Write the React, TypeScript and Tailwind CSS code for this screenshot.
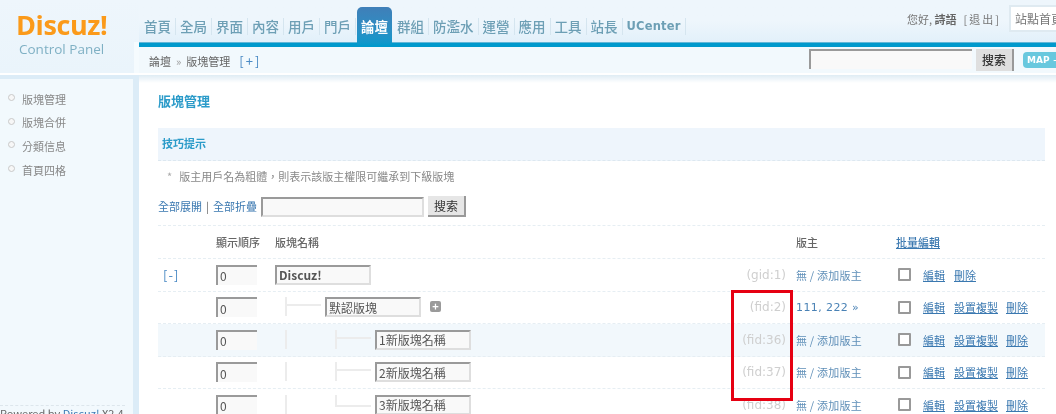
import React from "react";

const font = { fontFamily: '"Noto Sans CJK TC", "Liberation Sans", sans-serif' };

const navItems = ["首頁", "全局", "界面", "內容", "用戶", "門戶", "論壇", "群組", "防濫水", "運營", "應用", "工具", "站長", "UCenter"];
const sideItems = ["版塊管理", "版塊合併", "分類信息", "首頁四格"];

// old style bevelled input, top/left dark and bottom/right light
const inputCls =
  "h-[20px] border-2 border-t-[#9a9a9a] border-l-[#9a9a9a] border-r-[#dedede] border-b-[#dedede] bg-[#f9f9f9] outline-none text-[12px] text-[#555] px-[2px]";

const NavBar = () => (
  <div className="flex h-[42px] pl-[1px] items-end">
    {navItems.map((item) =>
      item === "論壇" ? (
        <div
          key={item}
          className="w-[35px] h-[39px] -mb-[4px] mx-[1px] rounded-t-[5px] bg-gradient-to-b from-[#3f7fb8] to-[#0099cc] text-white font-bold text-[13.5px] flex items-center justify-center"
        >
          {item}
        </div>
      ) : (
        <div
          key={item}
          className="h-[17px] mb-[7px] flex items-center px-[4px] border-r border-[#d5e5ef] text-[13.5px] font-medium leading-none text-[#6d9fb5] whitespace-nowrap"
        >
          {item === "UCenter" ? (
            <span className="text-[11.5px] font-bold tracking-[0.2px]" style={{ fontFamily: '"DejaVu Sans", sans-serif' }}>{item}</span>
          ) : (
            item
          )}
        </div>
      ),
    )}
  </div>
);

const TopBar = () => (
  <div className="h-[73px] flex shrink-0">
    <div className="w-[139px] shrink-0 relative pl-[16px] pt-[10px] bg-gradient-to-b from-[#eef6fc] to-[#eaf4fb]">
      <div className="text-[27px] leading-[30px] font-bold tracking-[-0.4px] text-[#fb9a1a]" style={{ fontFamily: '"Open Sans", sans-serif' }}>
        Discuz!
      </div>
      <div className="text-[13.5px] leading-[18px] ml-[3px] text-[#7fb0c4]" style={{ fontFamily: '"Open Sans", sans-serif' }}>
        Control Panel
      </div>
      <div className="absolute right-0 bottom-0 w-[5px] h-[31px] bg-[#f5fbfe]" />
    </div>
    <div className="flex-1 min-w-0">
      <div className="h-[42px] flex justify-between bg-gradient-to-b from-[#eef6fc] via-[#eef6fc] to-[#e2f0fa]">
        <NavBar />
        <div className="flex items-start pt-[5px] text-[11px] text-[#777] whitespace-nowrap -mr-[19px]">
          <span className="mt-[6px]">
            您好, <b className="text-[#666]">詩語</b>
            <span className="ml-[7px] tracking-[2px]">[退出]</span>
          </span>
          <div className="ml-[8px] w-[66px] h-[27px] border-2 border-[#dfeaf1] bg-white pl-[4px] leading-[23px] text-[#777] text-[12px] overflow-hidden">站點首頁</div>
        </div>
      </div>
      <div className="h-[5px] bg-[#0099cc] border-t border-[#62b7d8]" />
      <div className="h-[26px] flex items-center justify-between bg-[#f2f9fd]">
        <div className="pl-[10px] pt-[2px] text-[11px] text-[#666] whitespace-nowrap">
          論壇<span className="mx-[5px] text-[#999]">»</span>版塊管理
          <span className="ml-[9px] text-[13px] tracking-[2px] text-[#4a8ac4]">[+]</span>
        </div>
        <div className="flex items-center -mr-[7px]">
          <div className="w-[163px] h-[20px] mb-[2px] border-2 border-b-0 border-r-0 border-[#9a9a9a] bg-[#f9f9f9]" />
          <div className="ml-[4px] w-[38px] h-[22px] border-r-2 border-[#999] bg-[#dfdfdf] text-[12px] font-medium text-[#333] text-center leading-[22px]">搜索</div>
          <div className="ml-[9px] w-[40px] h-[16px] rounded-[4px] bg-[#68c8de] text-white font-bold text-[9px] pl-[4px] leading-[16px] whitespace-nowrap overflow-hidden" style={{ fontFamily: '"DejaVu Sans", sans-serif' }}>MAP +</div>
        </div>
      </div>
    </div>
  </div>
);

const Sidebar = () => (
  <div className="w-[139px] shrink-0 h-full flex flex-col bg-[#f2f9fd] border-r-[6px] border-[#dcecf7]">
    <div className="h-[4px] bg-[#dcecf7]" />
    <ul className="pt-[8px] pl-[8px] flex-1">
      {sideItems.map((item) => (
        <li key={item} className="h-[23.7px] flex items-center text-[11px] text-[#888]">
          <span className="w-[7px] h-[7px] rounded-full border border-[#c9c9c9] mr-[7px] -mt-[3px] bg-[#f7f7f7]" />
          {item}
        </li>
      ))}
    </ul>
    <div className="h-[9px] mr-[8px] border-t border-dashed border-[#dde6ec] text-[11px] leading-[13px] text-[#666] whitespace-nowrap pt-[1px]">
      Powered by <span className="text-[#3a7ab5]">Discuz!</span> X2.4
    </div>
  </div>
);

type Level = "pipe" | "tee" | "end";

const Tree = ({ kind }: { kind: Level }) => (
  <div className="w-[50px] h-[20px] pl-[10px] shrink-0">
    {kind === "pipe" && <div className="h-[19px] w-[2px] bg-[#ececec]" />}
    {kind === "tee" && (
      <div className="h-[19px] w-[36px] border-l-2 border-[#ececec]">
        <div className="h-[9px] border-b-2 border-[#ececec]" />
      </div>
    )}
    {kind === "end" && <div className="h-[12px] w-[36px] border-l-2 border-b-2 border-[#ececec]" />}
  </div>
);

const Ops = ({ copy }: { copy: boolean }) => (
  <div className="flex items-center pl-[2px] text-[11px] text-[#3a78b0] underline whitespace-nowrap">
    <span className="w-[13px] h-[13px] mr-[12px] border-2 border-[#999] rounded-[1px] bg-white" />
    <span className="w-[31px]">編輯</span>
    {copy && <span className="w-[52px]">設置複製</span>}
    <span>刪除</span>
  </div>
);

const Row = ({
  toggle,
  levels = [],
  name,
  bold,
  plus,
  id,
  owner,
  copy = true,
  bg,
}: {
  toggle?: boolean;
  levels?: Level[];
  name: string;
  bold?: boolean;
  plus?: boolean;
  id: string;
  owner?: string;
  copy?: boolean;
  bg?: boolean;
}) => (
  <div className={`grid grid-cols-[58px_59px_521px_100px_149px] items-center h-[32.5px] border-b border-dashed border-[#e6eef3] ${bg ? "bg-[#f2f8fc]" : ""}`}>
    <div className="pl-[5px] text-[13px] text-[#4a8ac4] tracking-[1px]">{toggle ? "[-]" : ""}</div>
    <input readOnly defaultValue="0" className={`${inputCls} w-[41px] border-r-0 border-b-0`} />
    <div className="flex items-center min-w-0">
      {levels.map((l, i) => (
        <Tree key={i} kind={l} />
      ))}
      <input readOnly defaultValue={name} className={`${inputCls} w-[96px] ${bold ? "font-bold text-[#333]" : ""}`} />
      {plus && <span className="ml-[9px] -mt-[2px] w-[11px] h-[11px] rounded-[2px] bg-[#9a9a9a] text-white text-[11px] leading-[11px] font-bold text-center">+</span>}
      <span className="ml-auto pr-[10px] text-[12px] text-[#cfcfcf]" style={{ fontFamily: '"DejaVu Sans", sans-serif' }}>{id}</span>
    </div>
    <div className="text-[11px]">
      {owner ? (
        <span className="font-medium tracking-[0.4px] text-[#4a82b5]" style={{ fontFamily: '"DejaVu Sans", sans-serif' }}>{owner}</span>
      ) : (
        <span className="text-[#5f8fb8] tracking-[0.2px]">無 / 添加版主</span>
      )}
    </div>
    <Ops copy={copy} />
  </div>
);

export default function App() {
  const rows = [
    { toggle: true, name: "Discuz!", bold: true, id: "(gid:1)", copy: false, levels: [] as Level[] },
    { name: "默認版塊", plus: true, id: "(fid:2)", owner: "111, 222 »", levels: ["tee"] as Level[] },
    { name: "1新版塊名稱", id: "(fid:36)", bg: true, levels: ["pipe", "tee"] as Level[] },
    { name: "2新版塊名稱", id: "(fid:37)", levels: ["pipe", "tee"] as Level[] },
    { name: "3新版塊名稱", id: "(fid:38)", levels: ["pipe", "end"] as Level[] },
  ];

  return (
    <div className="w-[1056px] h-[414px] overflow-hidden relative bg-white flex flex-col blur-[0.4px]" style={font}>
      <TopBar />
      <div className="h-[2px] bg-white shrink-0" />
      <div className="flex flex-1 min-h-0">
        <Sidebar />
        <div className="flex-1 min-w-0 overflow-hidden">
          <div className="h-[8px] -mb-[8px] bg-gradient-to-b from-[#dfecf4] to-white" />
          <div className="pl-[19px] pr-[11px]">
            <h1 className="pt-[17px] h-[53px] text-[13px] font-bold leading-[18px] text-[#2b9bc9]">版塊管理</h1>
            <div className="h-[33px] bg-[#eef5fc] border-b border-dashed border-[#dde8f0] pl-[4px] text-[11px] font-bold leading-[31px] text-[#2b9bc9]">技巧提示</div>
            <div className="h-[31px] pl-[9px] flex items-center text-[11px] text-[#888]">
              <span className="text-[#aaa] mr-[7px]">*</span>
              版主用戶名為粗體，則表示該版主權限可繼承到下級版塊
            </div>
            <div className="h-[34px] flex items-center text-[11px] text-[#3a78b0] border-b border-dashed border-[#e6eef3] pb-[4px]">
              全部展開<span className="mx-[4px] text-[#666]">|</span>全部折疊
              <div className="ml-[4px] w-[163px] h-[20px] border-2 border-t-[#9a9a9a] border-l-[#9a9a9a] border-r-[#dedede] border-b-[#dedede] bg-[#f9f9f9]" />
              <div className="ml-[4px] w-[38px] h-[21px] border-r-2 border-b-2 border-[#999] bg-[#e6e6e6] text-[12px] text-[#333] text-center leading-[19px]">搜索</div>
            </div>
            <div className="grid grid-cols-[58px_59px_521px_100px_149px] items-center h-[33px] border-b border-dashed border-[#e6eef3] text-[11px] font-medium text-[#666]">
              <div />
              <div>顯示順序</div>
              <div>版塊名稱</div>
              <div>版主</div>
              <div className="text-[#3a78b0] underline">批量編輯</div>
            </div>
            {rows.map((r) => (
              <Row key={r.id} {...r} />
            ))}
          </div>
        </div>
      </div>
      <div className="absolute left-[731px] top-[290px] w-[62px] h-[111px] border-[3px] border-[#e60012]" />
    </div>
  );
}
